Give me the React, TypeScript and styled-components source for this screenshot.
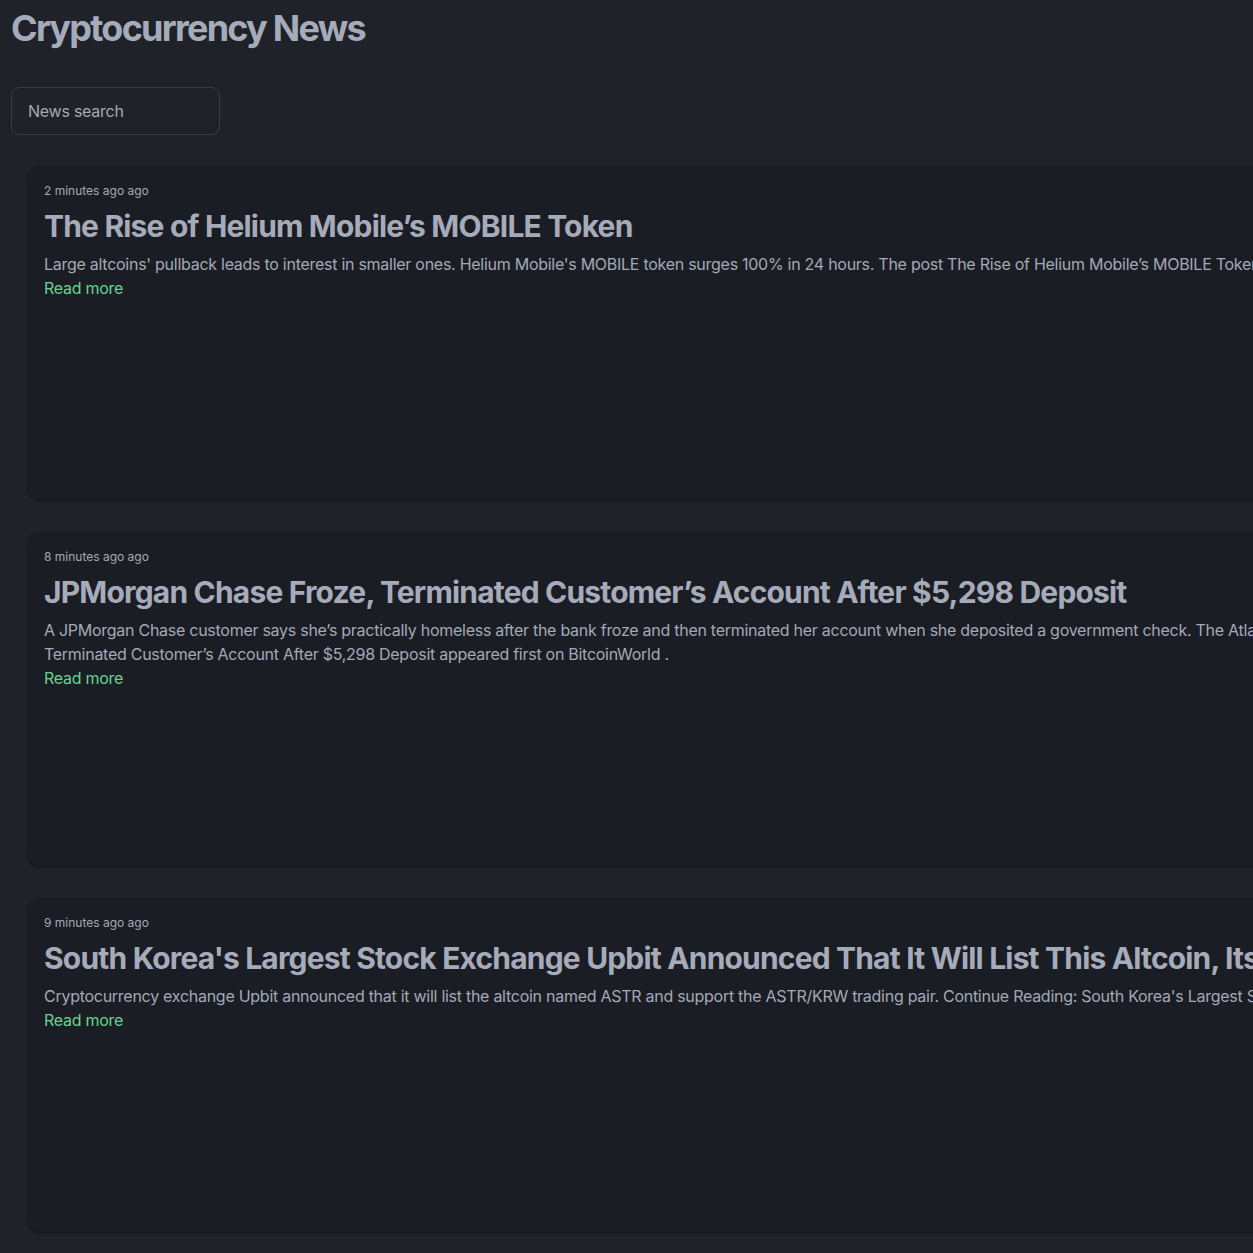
import React from "react";
import styled, { createGlobalStyle } from "styled-components";

const GlobalStyle = createGlobalStyle`
  html, body {
    margin: 0;
    padding: 0;
    background: #1f2229;
    overflow: hidden;
  }
  body {
    font-family: Inter, "Noto Sans", "Liberation Sans", sans-serif;
    color: #a3a9b7;
  }
`;

const Page = styled.div`
  padding: 0 11px 20px 11px;
  width: 2200px;
`;

const Heading = styled.h1`
  margin: 0;
  padding-top: 6px;
  font-size: 36px;
  font-weight: 700;
  line-height: 44px;
  color: #a6abba;
  letter-spacing: -1.75px;
`;

const SearchInput = styled.input`
  margin-top: 37px;
  display: block;
  box-sizing: border-box;
  width: 209px;
  height: 48px;
  padding: 0 16px;
  border: 1px solid #393c45;
  border-radius: 8px;
  background: transparent;
  font-family: inherit;
  font-size: 16px;
  letter-spacing: -0.25px;
  color: #a3a9b7;
  outline: none;
  &::placeholder {
    color: #a3a9b7;
  }
`;

const List = styled.div`
  margin-top: 32px;
  padding-left: 17px;
  display: flex;
  flex-direction: column;
  gap: 33px;
`;

const Card = styled.article`
  box-sizing: border-box;
  width: 2150px;
  height: 333px;
  padding: 16px;
  border-radius: 12px;
  background: #1b1d24;
  box-shadow: 0 1px 3px rgba(0, 0, 0, 0.3), 0 0 0 1px rgba(0, 0, 0, 0.12);
`;

const Meta = styled.div`
  font-size: 12px;
  line-height: 16px;
  color: #a3a9b7;
`;

const Title = styled.h2`
  margin: 9px 0 8px 0;
  font-size: 30px;
  font-weight: 700;
  line-height: 36px;
  letter-spacing: -0.82px;
  color: #a6abba;
  white-space: nowrap;
`;

const Body = styled.p`
  margin: 0;
  font-size: 16px;
  line-height: 24px;
  letter-spacing: -0.27px;
  color: #a3a9b7;
`;

const ReadMore = styled.a`
  display: inline-block;
  font-size: 16px;
  line-height: 24px;
  letter-spacing: -0.27px;
  color: #68d391;
  text-decoration: none;
`;

const items = [
  {
    time: "2 minutes ago ago",
    title: "The Rise of Helium Mobile’s MOBILE Token",
    body:
      "Large altcoins' pullback leads to interest in smaller ones. Helium Mobile's MOBILE token surges 100% in 24 hours. The post The Rise of Helium Mobile’s MOBILE Token appeared first on BitcoinWorld .",
  },
  {
    time: "8 minutes ago ago",
    title: "JPMorgan Chase Froze, Terminated Customer’s Account After $5,298 Deposit",
    body:
      "A JPMorgan Chase customer says she’s practically homeless after the bank froze and then terminated her account when she deposited a government check. The Atlanta resident says she has been left without access to her money for weeks now. The post JPMorgan Chase Froze, Terminated Customer’s Account After $5,298 Deposit appeared first on BitcoinWorld .",
  },
  {
    time: "9 minutes ago ago",
    title:
      "South Korea's Largest Stock Exchange Upbit Announced That It Will List This Altcoin, Its Price Jumped!",
    body:
      "Cryptocurrency exchange Upbit announced that it will list the altcoin named ASTR and support the ASTR/KRW trading pair. Continue Reading: South Korea's Largest Stock Exchange Upbit Announced That It Will List This Altcoin",
  },
];

export default function App() {
  return (
    <>
      <GlobalStyle />
      <Page>
        <Heading>Cryptocurrency News</Heading>
        <SearchInput placeholder="News search" />
        <List>
          {items.map((it) => (
            <Card key={it.title}>
              <Meta>{it.time}</Meta>
              <Title>{it.title}</Title>
              <Body>{it.body}</Body>
              <ReadMore href="#">Read more</ReadMore>
            </Card>
          ))}
        </List>
      </Page>
    </>
  );
}
